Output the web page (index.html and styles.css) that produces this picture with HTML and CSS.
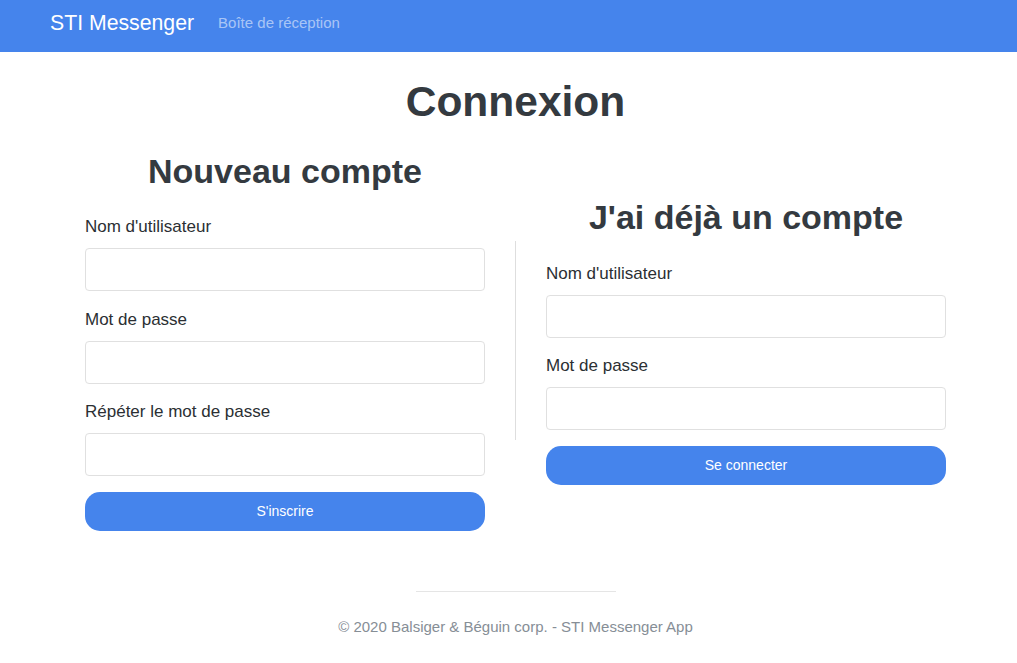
FILE: index.html
```html
<!DOCTYPE html>
<html lang="fr">
<head>
<meta charset="utf-8">
<title>STI Messenger - Connexion</title>
<link rel="stylesheet" href="styles.css">
</head>
<body>
<nav class="navbar">
  <a class="brand" href="#">STI Messenger</a>
  <a class="nav-link" href="#">Boîte de réception</a>
</nav>
<main class="page">
  <h1 class="title">Connexion</h1>
  <div class="row">
    <form class="col">
      <h2 class="col-title">Nouveau compte</h2>
      <div class="group">
        <label class="label">Nom d'utilisateur</label>
        <input class="input" type="text">
      </div>
      <div class="group">
        <label class="label">Mot de passe</label>
        <input class="input" type="password">
      </div>
      <div class="group">
        <label class="label">Répéter le mot de passe</label>
        <input class="input" type="password">
      </div>
      <button class="btn" type="button">S'inscrire</button>
    </form>
    <div class="divider"></div>
    <form class="col">
      <h2 class="col-title">J'ai déjà un compte</h2>
      <div class="group">
        <label class="label">Nom d'utilisateur</label>
        <input class="input" type="text">
      </div>
      <div class="group">
        <label class="label">Mot de passe</label>
        <input class="input" type="password">
      </div>
      <button class="btn" type="button">Se connecter</button>
    </form>
  </div>
  <footer class="footer">
    <hr class="footer-line">
    <p class="footer-text">© 2020 Balsiger &amp; Béguin corp. - STI Messenger App</p>
  </footer>
</main>
</body>
</html>
```

FILE: styles.css
```css
* { box-sizing: border-box; }
html, body { margin: 0; padding: 0; }
body {
  font-family: "Liberation Sans", Arial, sans-serif;
  font-size: 17px;
  color: #212529;
  background: #fff;
}
.navbar {
  height: 52px;
  background: #4584ec;
  display: flex;
  align-items: flex-start;
  padding: 7px 0 0 50px;
}
.brand {
  font-size: 21.25px;
  line-height: 32px;
  color: #fff;
  text-decoration: none;
}
.nav-link {
  font-size: 15px;
  line-height: 22.5px;
  margin: 5px 0 0 24px;
  color: rgba(255, 255, 255, 0.55);
  text-decoration: none;
}
.page {
  width: 946px;
  padding-left: 85px;
}
.title {
  margin: 24px 0 24px;
  font-size: 42.5px;
  line-height: 51px;
  font-weight: bold;
  text-align: center;
  color: #343a40;
}
.row {
  display: flex;
  align-items: center;
  gap: 30px;
}
.col {
  width: 400px;
  display: flex;
  flex-direction: column;
  margin: 0;
}
.divider {
  width: 1px;
  height: 199px;
  background: #dedede;
}
.col-title {
  margin: 0 0 22.5px;
  font-size: 34px;
  line-height: 40.8px;
  font-weight: bold;
  text-align: center;
  color: #343a40;
}
.group {
  display: flex;
  flex-direction: column;
  margin-bottom: 15.5px;
}
.label {
  font-size: 17px;
  line-height: 25.5px;
  margin-bottom: 8.5px;
  color: #2b2f33;
}
.input {
  height: 43px;
  width: 100%;
  border: 1px solid #e0e0e0;
  border-radius: 4px;
  background: #fff;
  font: inherit;
  padding: 6px 12px;
}
.btn {
  height: 39px;
  width: 100%;
  border: none;
  border-radius: 15px;
  background: #4584ec;
  color: #fff;
  font-family: "Liberation Sans", Arial, sans-serif;
  font-size: 14px;
}
.footer {
  margin-top: 60.5px;
  display: flex;
  flex-direction: column;
  align-items: center;
}
.footer-line {
  width: 200px;
  margin: 0;
  border: none;
  border-top: 1px solid #e5e5e5;
}
.footer-text {
  margin: 24px 0 0;
  font-size: 15px;
  line-height: 22.5px;
  color: #868e96;
}
```
